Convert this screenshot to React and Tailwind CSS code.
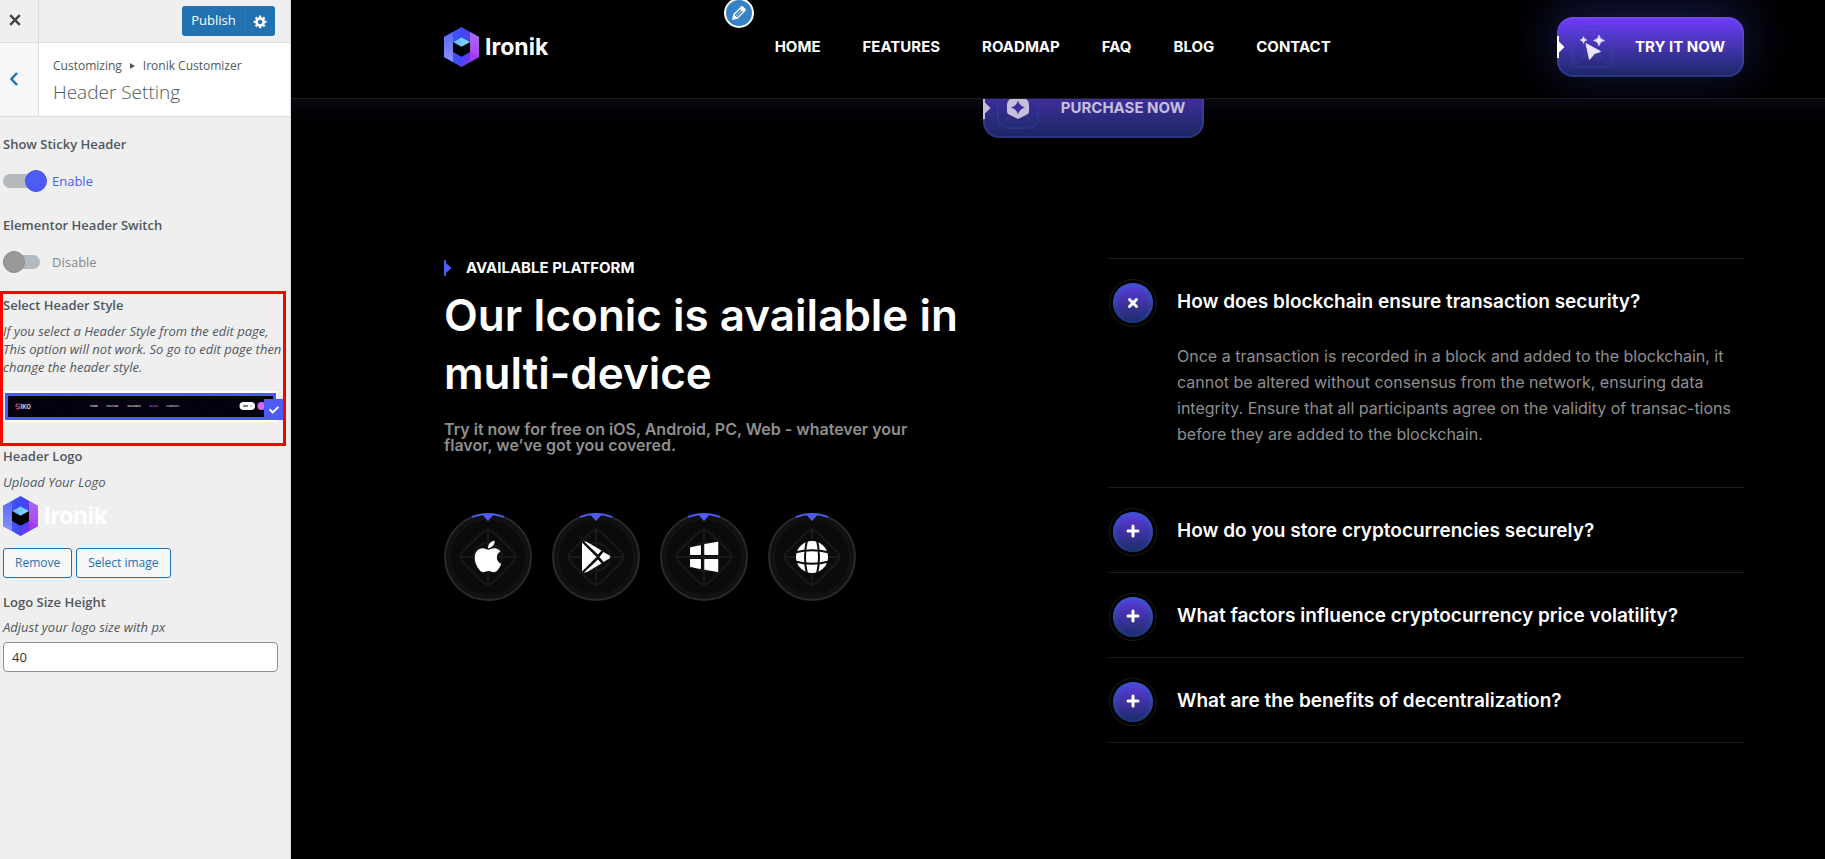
import { useState } from "react";
import { FaApple, FaCheck } from "react-icons/fa";

const SANS = "font-['Open_Sans','Noto_Sans',sans-serif]";
const INTER = "font-['Inter',sans-serif]";

function Logo({ id }) {
  return (
    <span className="flex items-center gap-1.5">
      <svg width="35" height="40" viewBox="0 0 105 120" aria-hidden="true">
        <defs>
          <linearGradient id={`${id}-l`} x1="0" y1="0" x2="0" y2="1">
            <stop offset="0" stopColor="#5a68f8" />
            <stop offset="1" stopColor="#8a93ff" />
          </linearGradient>
          <linearGradient id={`${id}-m`} x1="0" y1="0" x2="1" y2="0">
            <stop offset="0" stopColor="#4a5cf6" />
            <stop offset="0.5" stopColor="#3d49f5" />
            <stop offset="1" stopColor="#6a2cf0" />
          </linearGradient>
          <linearGradient id={`${id}-r`} x1="0" y1="0" x2="0" y2="1">
            <stop offset="0" stopColor="#a56bf7" />
            <stop offset="1" stopColor="#b03bf2" />
          </linearGradient>
          <linearGradient id={`${id}-t`} x1="0" y1="0" x2="1" y2="0">
            <stop offset="0" stopColor="#62b4fb" />
            <stop offset="1" stopColor="#7fe0ff" />
          </linearGradient>
        </defs>
        <path d="M52.500 0L105 30V90L52.500 120L0 90V30Z" fill={`url(#${id}-m)`} />
        <path d="M0 30L27 15V105L0 90Z" fill={`url(#${id}-l)`} />
        <path d="M78 15L105 30V90L78 105Z" fill={`url(#${id}-r)`} />
        <path d="M78 72L105 90L52.500 120L45 116Z" fill="#8a34f2" opacity="0.45" />
        <path d="M27 45L52.500 31L78 45V75L52.500 89L27 75Z" fill="#000" />
        <path d="M52.500 31L78 45L52.500 59L27 45Z" fill={`url(#${id}-t)`} />
      </svg>
      <span className={`${INTER} text-[23px] leading-8 font-bold text-white`}>Ironik</span>
    </span>
  );
}

function Toggle({ initial }) {
  const [on, setOn] = useState(initial);
  return (
    <label className="mt-4 flex h-[22px] w-fit cursor-pointer items-center gap-[5px] text-[13px]">
      <input type="checkbox" className="sr-only" checked={on} onChange={() => setOn(!on)} />
      <span className="relative flex h-[22px] w-11 items-center">
        <span className="h-3.5 w-[37px] rounded-full bg-[#b4b9be]" />
        <span
          className={`absolute top-0 h-[22px] w-[22px] rounded-full border ${
            on ? "left-[22px] border-[#4550e0] bg-[#4d5bf9]" : "left-0 border-[#8b8b8b] bg-[#999999]"
          }`}
        />
      </span>
      <span className={on ? "pt-0.5 text-[#4d5bf9]" : "pt-0.5 text-[#82878c]"}>{on ? "Enable" : "Disable"}</span>
    </label>
  );
}

function Title({ children, className = "" }) {
  return <h3 className={`text-[13px] leading-5 font-semibold text-[#50575e] ${className}`}>{children}</h3>;
}

function Hint({ children, className = "" }) {
  return <p className={`text-[13px] leading-[18px] text-[#50575e] italic ${className}`}>{children}</p>;
}

function StyleThumb() {
  return (
    <svg viewBox="0 0 265 21" className="block w-full" role="img" aria-label="Header style one">
      <rect width="265" height="21" fill="#04000f" />
      <g stroke="#12101f" strokeWidth="0.5" fill="none">
        <path d="M30 0L60 21M60 0L75 21M235 0L200 21M205 0L185 21" />
        <rect x="71" y="4" width="110" height="13" rx="6.500" />
      </g>
      <path d="M12.500 8Q7 8 8 10.500L11.500 11Q12 13.500 8 12.500" fill="none" stroke="#c0506e" strokeWidth="1.200" />
      <g fontFamily="Inter, sans-serif" fontWeight="700" fill="#fff">
        <text x="12.500" y="12.700" fontSize="6" fill="#d9d6e2">IKO</text>
        <g fontSize="2.600" fill="#cfcdd8">
          <text x="82" y="11.400">HOME</text>
          <text x="98.500" y="11.400">FEATURE</text>
          <text x="119.500" y="11.400">ROADMAP</text>
          <text x="141.500" y="11.400" fill="#a04fc0">BLOGS</text>
          <text x="158.500" y="11.400">CONTACT</text>
        </g>
      </g>
      <rect x="231.500" y="6" width="15.500" height="8" rx="4" fill="#fff" />
      <path d="M235 10H240" stroke="#333" strokeWidth="1.200" />
      <path d="M242 10H244" stroke="#d58be8" strokeWidth="1.200" />
      <circle cx="253.500" cy="10" r="4" fill="#d869f0" />
    </svg>
  );
}

function Sidebar() {
  return (
    <aside className={`${SANS} w-[291px] shrink-0 border-r border-[#dcdcde] bg-[#efefef] text-[#3c434a]`}>
      <div className="flex h-[43px] items-center border-b border-[#dcdcde]">
        <button type="button" aria-label="Close" className="flex h-full w-[39px] items-center justify-center border-r border-[#dcdcde] pr-2 pb-0.5 text-[#3c434a]">
          <svg width="12" height="12" viewBox="0 0 12 12" stroke="currentColor" strokeWidth="2.400" aria-hidden="true">
            <path d="M1.200 1.200L10.800 10.800M10.800 1.200L1.200 10.800" />
          </svg>
        </button>
        <div className="mr-[15px] ml-auto flex h-[30px] overflow-hidden rounded-[3px] bg-[#2271b1] text-[13px] text-white">
          <button type="button" className="w-[63px]">Publish</button>
          <button type="button" aria-label="Publish settings" className="flex w-[30px] items-center justify-center border-l border-[#2a78b8]">
            <svg width="15" height="15" viewBox="0 0 20 20" fill="currentColor" aria-hidden="true">
              <path d="M18 12h-2.180c-.17.7-.44 1.350-.81 1.930l1.540 1.540-2.100 2.100-1.540-1.540c-.58.36-1.230.63-1.910.79V19H8v-2.180c-.68-.16-1.330-.43-1.910-.79l-1.540 1.540-2.120-2.120 1.540-1.540c-.36-.58-.63-1.230-.79-1.910H1V9.030h2.170c.16-.7.44-1.350.8-1.940L2.430 5.550l2.100-2.100 1.540 1.540c.58-.37 1.240-.64 1.930-.81V2h3v2.180c.68.16 1.330.43 1.910.79l1.540-1.540 2.120 2.120-1.540 1.540c.36.59.64 1.240.8 1.940H18V12zm-8.500 1.500c1.660 0 3-1.340 3-3s-1.340-3-3-3-3 1.340-3 3 1.340 3 3 3z" />
            </svg>
          </button>
        </div>
      </div>
      <div className="flex h-[74px] border-b border-[#dcdcde] bg-white">
        <button type="button" aria-label="Back" className="flex w-[39px] items-center justify-center border-r border-[#dcdcde] bg-[#f6f7f7] pr-2.5 pb-0.5 text-[#2271b1]">
          <svg width="8" height="14" viewBox="0 0 8 14" fill="none" stroke="currentColor" strokeWidth="2.400" aria-hidden="true">
            <path d="M7 1L1.500 7L7 13" />
          </svg>
        </button>
        <div className="flex flex-col justify-center pt-1 pl-3.5">
          <span className="flex items-center gap-2 text-xs leading-5 text-[#50575e]">
            Customizing
            <svg width="5" height="6" viewBox="0 0 5 6" aria-hidden="true">
              <path d="M0 0L5 3L0 6Z" fill="#50575e" />
            </svg>
            Ironik Customizer
          </span>
          <h2 className="text-[19px] leading-8 font-light text-[#50575e]">Header Setting</h2>
        </div>
      </div>

      <div className="pt-[17px]">
        <div className="pl-[3px]">
          <Title>Show Sticky Header</Title>
          <Toggle initial={true} />
          <Title className="mt-[23px]">Elementor Header Switch</Title>
          <Toggle initial={false} />
        </div>

        <section className="mt-[18px] mr-1 border-[3px] border-[#ff0000] pt-px pb-[21px]">
          <Title>Select Header Style</Title>
          <Hint className="mt-[7px]">
            If you select a Header Style from the edit page, This option will not work. So go to edit page then change the header style.
          </Hint>
          <label className="relative mt-[15px] mr-[5px] block cursor-pointer bg-white p-0.5">
            <input type="radio" name="header-style" defaultChecked className="sr-only" />
            <span className="block border-[3px] border-[#4d5bf9]">
              <StyleThumb />
            </span>
            <span className="absolute -right-[5px] bottom-0.5 flex h-[21px] w-[19px] items-center justify-center bg-[#4d5bf9] text-white">
              <FaCheck size={10} />
            </span>
          </label>
        </section>

        <div className="pr-3 pl-[3px]">
          <Title>Header Logo</Title>
          <Hint className="mt-[7px]">Upload Your Logo</Hint>
          <div className="mt-[5px]">
            <Logo id="side" />
          </div>
          <div className="mt-3 flex gap-1 text-xs text-[#2271b1]">
            <button type="button" className="h-[30px] rounded-[3px] border border-[#2271b1] bg-[#f6f7f7] px-[11px]">Remove</button>
            <button type="button" className="h-[30px] rounded-[3px] border border-[#2271b1] bg-[#f6f7f7] px-[11px]">Select image</button>
          </div>
          <label htmlFor="logo-height" className="mt-3.5 block text-[13px] leading-5 font-semibold text-[#50575e]">Logo Size Height</label>
          <Hint className="mt-1.5">Adjust your logo size with px</Hint>
          <input id="logo-height" type="text" defaultValue="40" className="mt-1.5 block h-[30px] w-full rounded-sm border border-[#8c8f94] bg-white px-2 text-[13px] text-[#2c3338]" />
        </div>
      </div>
    </aside>
  );
}

function IconFrame({ children }) {
  return (
    <svg width="42" height="42" viewBox="0 0 42 42" fill="none" aria-hidden="true">
      <rect x="1" y="1" width="40" height="40" rx="9" stroke="#2b4cb0" strokeOpacity="0.3" strokeWidth="2" />
      <circle cx="21" cy="21" r="9.500" stroke="#2b4cb0" strokeOpacity="0.25" strokeWidth="1.500" />
      <path d="M4 4L15 15M38 4L27 15M4 38L15 27M38 38L27 27" stroke="#2b4cb0" strokeOpacity="0.3" strokeWidth="1.500" />
      {children}
    </svg>
  );
}

function GradientButton({ children, icon, className = "" }) {
  return (
    <a
      href="#buy"
      className={`relative flex h-[60px] items-center gap-[21px] rounded-2xl bg-linear-to-b pr-[18px] pl-3.5 text-[15px] font-bold whitespace-nowrap ${className}`}
    >
      <span className="absolute inset-0 rounded-2xl shadow-[inset_0_0_0_2px_rgba(120,140,255,0.16)]" />
      <svg width="8" height="22" viewBox="0 0 8 22" className="absolute top-[19px] left-0" aria-hidden="true">
        <path d="M0 0H2V5.500L7.500 11L2 16.500V22H0Z" fill="currentColor" />
      </svg>
      {icon}
      <span className="px-px">{children}</span>
    </a>
  );
}

function SiteHeader() {
  return (
    <header className="relative z-10 flex h-[99px] items-center overflow-hidden border-b border-[#1c1d1c] bg-black pr-[81px] pb-1 pl-[153px]">
      <button type="button" aria-label="Edit menu" className="absolute -top-0.5 left-[433px] flex h-[30px] w-[30px] items-center justify-center rounded-full border-2 border-white bg-[#3582c4] text-white">
        <svg width="20" height="20" viewBox="0 0 20 20" fill="currentColor" aria-hidden="true">
          <path d="M13.890 3.390l2.710 2.720c.46.46.42 1.240.03 1.640l-8.010 8.020-5.560 1.160 1.160-5.580s7.600-7.630 7.990-8.030c.39-.39 1.220-.39 1.680.07zm-2.730 2.790l-5.590 5.610 1.110 1.110 5.540-5.650zm-2.970 8.230l5.580-5.600-1.070-1.080-5.590 5.600z" />
        </svg>
      </button>
      <a href="#home">
        <Logo id="main" />
      </a>
      <nav className="mx-auto flex gap-[42px] text-[15px] font-bold text-white">
        {["HOME", "FEATURES", "ROADMAP", "FAQ", "BLOG", "CONTACT"].map((item) => (
          <a key={item} href={`#${item.toLowerCase()}`}>{item}</a>
        ))}
      </nav>
      <GradientButton
        className="from-[#713bff] to-[#192763] text-white shadow-[0_-8px_50px_4px_rgba(77,91,249,0.28)]"
        icon={
          <IconFrame>
            <path d="M15 17.500L29.500 25.500L23.500 27.500L18.500 33.500Z" fill="#e9e6ff" stroke="#e9e6ff" strokeLinejoin="round" />
            <path d="M28 9Q28.800 13.700 33.500 14.500Q28.800 15.300 28 20Q27.200 15.300 22.500 14.500Q27.200 13.700 28 9Z" fill="#e9e6ff" stroke="#e9e6ff" strokeWidth="0.6" />
            <path d="M12.500 10.500Q13 13.500 16 14Q13 14.500 12.500 17.500Q12 14.500 9 14Q12 13.500 12.500 10.500Z" fill="#e9e6ff" stroke="#e9e6ff" strokeWidth="0.5" />
          </IconFrame>
        }
      >
        TRY IT NOW
      </GradientButton>
    </header>
  );
}

function PlayGlyph() {
  return (
    <g fill="#fff">
      <path d="M30 29.500L44.500 44L30 58.500Z" />
      <path d="M32 28.500Q34 28.300 35.500 29.300L49.500 37.500L46 41.500Z" />
      <path d="M32 59.500Q34 59.700 35.500 58.700L49.500 50.500L46 46.500Z" />
      <path d="M51.500 39L57.500 42.500Q59 44 57.500 45.500L51.500 49L47.500 44Z" />
    </g>
  );
}

function WindowsGlyph() {
  return (
    <g fill="#fff" stroke="#fff" strokeWidth="1.500" strokeLinejoin="round">
      <path d="M30.800 35L40.200 33V41.300H30.800Z" />
      <path d="M45 31.800L57.500 29.500V41.300H45Z" />
      <path d="M30.800 46.700H40.200V55.200L30.800 53.200Z" />
      <path d="M45 46.700H57.500V58.200L45 56Z" />
    </g>
  );
}

function GlobeGlyph() {
  return (
    <g>
      <circle cx="44" cy="44" r="16" fill="#fff" />
      <g fill="none" stroke="#0c0c0c" strokeWidth="2">
        <path d="M39 27Q35 44 39 61M49 27Q53 44 49 61" />
        <path d="M27 39.500Q44 35 61 39.500M27 48.500Q44 53 61 48.500" />
      </g>
    </g>
  );
}

function Platform({ label, children }) {
  return (
    <a href={`#${label.toLowerCase()}`} aria-label={label}>
      <svg width="88" height="88" viewBox="0 0 88 88" aria-hidden="true">
        <circle cx="44" cy="44" r="43" fill="#111" stroke="#2a2a2a" strokeWidth="2" />
        <circle cx="44" cy="44" r="37" fill="#0b0b0b" />
        <g fill="none" stroke="#191919" strokeWidth="2">
          <rect x="22.500" y="22.500" width="43" height="43" rx="8" transform="rotate(45 44 44)" />
          <circle cx="44" cy="44" r="14" />
          <path d="M44 15V73M15 44H73" />
        </g>
        <path d="M29 3.600Q44 -1.500 59 3.600" fill="none" stroke="#4d5bf9" strokeWidth="2" strokeLinecap="round" />
        <path d="M38.500 1.200H49.500L44 7.500Z" fill="#4d5bf9" stroke="#4d5bf9" />
        {children}
      </svg>
    </a>
  );
}

const FAQS = [
  {
    q: "How does blockchain ensure transaction security?",
    a: "Once a transaction is recorded in a block and added to the blockchain, it cannot be altered without consensus from the network, ensuring data integrity. Ensure that all participants agree on the validity of transac-tions before they are added to the blockchain.",
  },
  { q: "How do you store cryptocurrencies securely?", a: "Keep your private keys in a hardware wallet that stays offline." },
  { q: "What factors influence cryptocurrency price volatility?", a: "Supply, demand, regulation and market sentiment all move the price." },
  { q: "What are the benefits of decentralization?", a: "No single party can control or shut down the network." },
];

function FaqItem({ item, open, onToggle }) {
  return (
    <li className="border-b border-[#1d1d1d]">
      <button type="button" aria-expanded={open} onClick={onToggle} className="flex w-full items-center gap-5 pt-5 pb-4 text-left">
        <span className="flex h-12 w-12 shrink-0 items-center justify-center rounded-full border border-[#1b1b1b]">
          <span className="flex h-10 w-10 items-center justify-center rounded-full bg-linear-to-b from-[#6238e4] to-[#1b2a66] text-white shadow-[inset_0_2px_6px_rgba(30,110,200,0.8)]">
            <svg width="14" height="16" viewBox="0 0 14 16" fill="none" stroke="currentColor" strokeWidth="3" strokeLinecap="round" aria-hidden="true">
              {open ? <path d="M3.500 4.500L10.500 11.500M10.500 4.500L3.500 11.500" /> : <path d="M7 2V12M2 7H12" />}
            </svg>
          </span>
        </span>
        <span className="pb-0.5 text-[19px] leading-6 font-semibold text-white">{item.q}</span>
      </button>
      {open && <p className="pb-10 pl-[68px] text-base leading-[26px] text-[#8f8f8f]">{item.a}</p>}
    </li>
  );
}

function Preview() {
  const [open, setOpen] = useState(0);
  return (
    <main className={`${INTER} min-w-0 flex-1 bg-black`}>
      <SiteHeader />
      <div className="flex justify-center bg-linear-to-b from-[#080914] to-black to-[40px] pl-[71px]">
        <GradientButton
          className="-mt-[21px] from-[#512fb8] to-[#192763] text-[#c4c0dc]"
          icon={
            <IconFrame>
              <path d="M13 12Q21 7 29 12Q32 14 32 18V25Q32 27 29 28L21 32L13 28Q10 27 10 25V18Q10 14 13 12Z" fill="currentColor" />
              <path d="M21 13.500Q22.500 19 28 20.500Q22.500 22 21 27.500Q19.500 22 14 20.500Q19.500 19 21 13.500Z" fill="#3d2c9c" />
            </IconFrame>
          }
        >
          PURCHASE NOW
        </GradientButton>
      </div>
      <div className="grid grid-cols-2 gap-[30px] pt-[120px] pr-[81px] pb-16 pl-[153px]">
        <section>
          <div className="flex items-center gap-3.5 text-[15px] leading-5 font-bold text-white">
            <svg width="8" height="16" viewBox="0 0 8 16" aria-hidden="true">
              <path d="M0 0H2V3L7.500 8L2 13V16H0Z" fill="#4d5bf9" />
            </svg>
            AVAILABLE PLATFORM
          </div>
          <h1 className="mt-2 max-w-[540px] text-[44px] leading-[58px] font-semibold text-white">Our Iconic is available in multi-device</h1>
          <p className="mt-[19px] max-w-[500px] text-base leading-4 font-semibold text-[#8f8f8f]">
            Try it now for free on iOS, Android, PC, Web - whatever your flavor, we’ve got you covered.
          </p>
          <div className="mt-[60px] flex gap-5">
            <Platform label="Apple">
              <FaApple x="26" y="25.500" size={36} color="#fff" />
            </Platform>
            <Platform label="Android">
              <PlayGlyph />
            </Platform>
            <Platform label="Windows">
              <WindowsGlyph />
            </Platform>
            <Platform label="Web">
              <GlobeGlyph />
            </Platform>
          </div>
        </section>
        <ul className="border-t border-[#1d1d1d]">
          {FAQS.map((item, i) => (
            <FaqItem key={item.q} item={item} open={open === i} onToggle={() => setOpen(open === i ? -1 : i)} />
          ))}
        </ul>
      </div>
    </main>
  );
}

export default function App() {
  return (
    <div className="flex min-h-screen">
      <Sidebar />
      <Preview />
    </div>
  );
}
